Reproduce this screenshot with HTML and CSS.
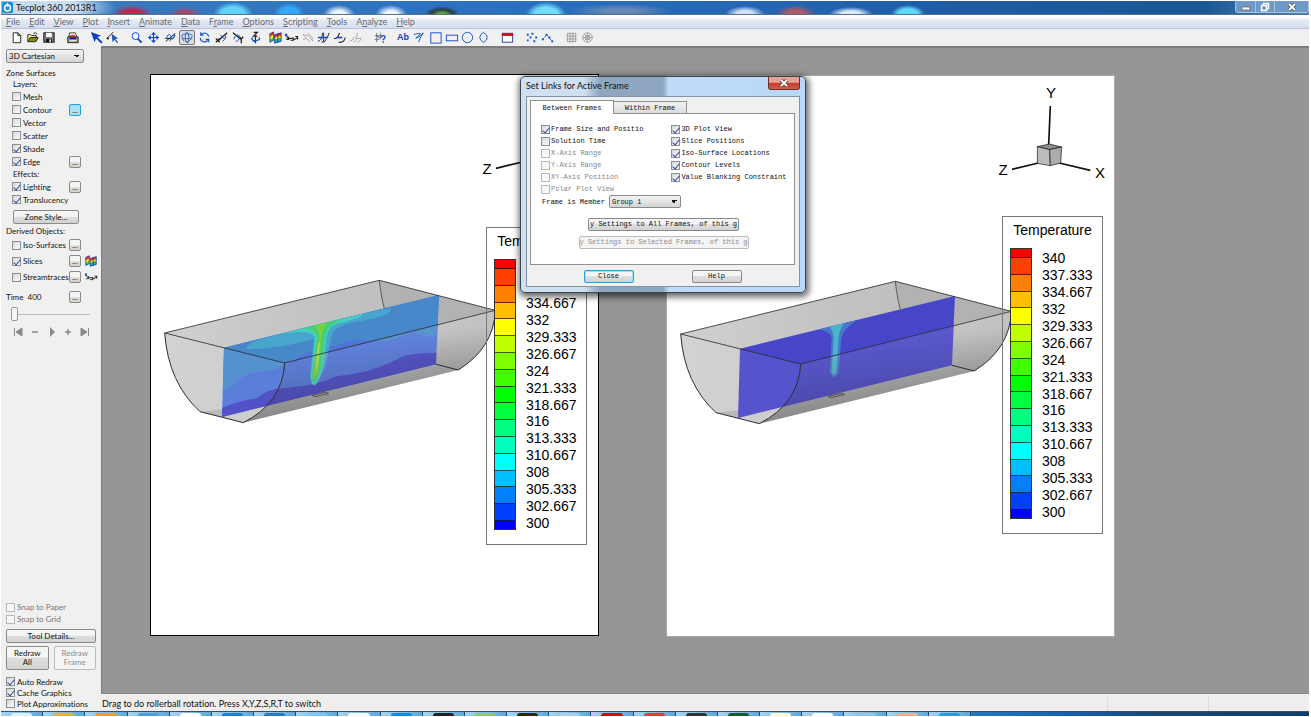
FILE: index.html
```html
<!DOCTYPE html>
<html lang="en">
<head>
    <meta charset="UTF-8">
    <meta name="viewport" content="width=device-width, initial-scale=1.0">
    <title>Tecplot 360 2013R1</title>
    <link rel="stylesheet" href="styles.css">
</head>
<body>

<div class="app">
    <header class="titlebar">
        <svg class="logo" viewBox="0 0 12 12"><rect width="12" height="12" rx="2" fill="#1d8fd0"/><circle cx="6" cy="6.5" r="3.2" fill="none" stroke="#fff" stroke-width="1.6"/><path d="M6 1v4" stroke="#fff" stroke-width="1.4"/></svg>
        <h1>Tecplot 360 2013R1</h1>
        <div class="window-buttons">
            <button aria-label="Minimize"><svg viewBox="0 0 12 10"><rect x="2" y="5" width="8" height="3" fill="#fff" stroke="#556" stroke-width=".7"/></svg></button>
            <button aria-label="Restore"><svg viewBox="0 0 12 10"><path d="M4.500 3V1.500h5v5H8M2.500 3.500h5v5h-5z" fill="none" stroke="#fff" stroke-width="1.500"/></svg></button>
            <button class="wide" aria-label="Close"><svg viewBox="0 0 12 10"><path d="M3 2l6 6M9 2L3 8" stroke="#445" stroke-width="3.200"/><path d="M3 2l6 6M9 2L3 8" stroke="#fff" stroke-width="1.900"/></svg></button>
        </div>
    </header>

    <nav class="menubar">
        <a href="#"><u>F</u>ile</a>
        <a href="#"><u>E</u>dit</a>
        <a href="#"><u>V</u>iew</a>
        <a href="#"><u>P</u>lot</a>
        <a href="#"><u>I</u>nsert</a>
        <a href="#"><u>A</u>nimate</a>
        <a href="#"><u>D</u>ata</a>
        <a href="#">F<u>r</u>ame</a>
        <a href="#"><u>O</u>ptions</a>
        <a href="#"><u>S</u>cripting</a>
        <a href="#"><u>T</u>ools</a>
        <a href="#">A<u>n</u>alyze</a>
        <a href="#"><u>H</u>elp</a>
    </nav>

    <div class="toolbar">
        <div class="group">
            <button aria-label="New"><svg viewBox="0 0 16 16"><path d="M4.500 3h5l3 3v7.500h-8zM9.500 3v3h3" fill="#fff" stroke="#222"/></svg></button>
            <button aria-label="Open"><svg viewBox="0 0 16 16"><path d="M3 12V5h3l1 1h5v2" fill="#ffff9a" stroke="#222"/><path d="M3 12.500L5.500 8H14l-2.500 4.500z" fill="#8a8a00" stroke="#222"/><path d="M9 3.500q2-1.500 4 1" fill="none" stroke="#222"/></svg></button>
            <button aria-label="Save"><svg viewBox="0 0 16 16"><rect x="3" y="3" width="11" height="10" fill="#777" stroke="#111"/><rect x="5.500" y="3" width="6" height="4.500" fill="#fff"/><rect x="5.500" y="9.500" width="6" height="3.500" fill="#111"/><rect x="9" y="10" width="1.500" height="3" fill="#fff"/></svg></button>
        </div>
        <div class="group">
            <button aria-label="Print"><svg viewBox="0 0 16 16"><path d="M5 3h6l1.500 4H4z" fill="#fff" stroke="#333"/><rect x="3" y="7.500" width="11" height="6" fill="#a8a078" stroke="#222"/><path d="M6 5h4l1 2H6z" fill="#e33"/><path d="M5 9h7" stroke="#00c" stroke-width="1.500"/><path d="M5 11.500h7" stroke="#fff"/></svg></button>
        </div>
        <div class="group">
            <button aria-label="Select"><svg viewBox="0 0 16 16"><path d="M2 2l11 4-4 1.500 5.500 5.500-1.500 1.500-5.500-5.500L6 13z" fill="#0a3fc4"/></svg></button>
            <button aria-label="Adjust"><svg viewBox="0 0 16 16"><path d="M9 2L2 9" stroke="#222" fill="none"/><path d="M7 4l7 5-3 .5 3 3.500-1 1-3-3.500-2 2.500z" fill="#2456b8"/><circle cx="3" cy="9" r="1.200" fill="#222"/></svg></button>
        </div>
        <div class="group view">
            <button aria-label="Zoom"><svg viewBox="0 0 16 16"><circle cx="7" cy="6.500" r="3.700" fill="#f4f8ff" stroke="#0a46c8"/><path d="M9.500 9.500l4 4" stroke="#0a46c8" stroke-width="2"/></svg></button>
            <button aria-label="Translate"><svg viewBox="0 0 16 16"><path d="M8 3v10M3 8h10M6 5l2-2 2 2M6 11l2 2 2-2M5 6L3 8l2 2M11 6l2 2-2 2" fill="none" stroke="#0a46c8" stroke-width="1.300"/></svg></button>
            <button aria-label="Spherical rotation"><svg viewBox="0 0 16 16"><path d="M3 12l10-8M2 9h8l3-3" fill="none" stroke="#222"/><path d="M5 10q-2-5 2-5 3 1 0 7M9 10q4-1 3-6l-3 3" fill="none" stroke="#1550c8"/></svg></button>
            <button class="pressed" aria-label="Rollerball rotation"><svg viewBox="0 0 16 16"><ellipse cx="8" cy="6.500" rx="6.500" ry="3" fill="none" stroke="#1550c8"/><ellipse cx="8" cy="8" rx="2.300" ry="6.500" fill="none" stroke="#1550c8"/><path d="M2 9l2 3M14 9l-3 3M10 14l-3-1" stroke="#234"/></svg></button>
            <button aria-label="Twist"><svg viewBox="0 0 16 16"><path d="M3.500 8.500a4.500 4.500 0 0 0 8 2.500M12.500 7a4.500 4.500 0 0 0-8-2M4 2.500V5.500h3M12.500 13v-3h-3" fill="none" stroke="#1550c8" stroke-width="1.200"/></svg></button>
            <button aria-label="Rotate about X"><svg viewBox="0 0 16 16"><path d="M2 9l4 4M6 9l-4 4M5 11l9-8" stroke="#222" stroke-width="1.400"/><path d="M7 5q3 6 5 3M9 12q5-3 3-6" fill="none" stroke="#1550c8"/></svg></button>
            <button aria-label="Rotate about Y"><svg viewBox="0 0 16 16"><path d="M2 3l9 7M9 7l2 3 2-3M11 10v4" stroke="#222" stroke-width="1.400" fill="none"/><path d="M3 10q1-6 6-4M5 12q4 0 4-5" fill="none" stroke="#1550c8"/></svg></button>
            <button aria-label="Rotate about Z"><svg viewBox="0 0 16 16"><path d="M6 2.500h4L6 6.500h4M8 7v7" fill="none" stroke="#222" stroke-width="1.300"/><path d="M5 8q-3 3 3 3.500 6-1 3.500-3.500M5 12h3" fill="none" stroke="#1550c8" stroke-width="1.200"/></svg></button>
        </div>
        <div class="group">
            <button aria-label="Slice"><svg viewBox="0 0 16 16"><use href="#slice-icon"/></svg></button>
            <button aria-label="Streamtrace"><svg viewBox="0 0 16 16"><use href="#stream-icon"/></svg></button>
            <button aria-label="Streamtrace rake" disabled><svg viewBox="0 0 16 16"><path d="M3 5l6 1M3 5l8 8M9 6l5 6M8 3l5 5v4M3 10l4-1" fill="none" stroke="#aaa"/></svg></button>
            <button aria-label="Add contour"><svg viewBox="0 0 16 16"><path d="M2 12q4 0 5-9M6 13q5 0 5-5 2 0 3-5" fill="none" stroke="#222"/><path d="M2 8h11M8 3v10" stroke="#1550c8" stroke-width="1.400"/></svg></button>
            <button aria-label="Remove contour"><svg viewBox="0 0 16 16"><path d="M2 9q4 1 6-6M7 13q6 1 7-5" fill="none" stroke="#222" stroke-width="1.200"/><path d="M5 8h6" stroke="#1550c8" stroke-width="1.800"/></svg></button>
            <button aria-label="Contour label" disabled><svg viewBox="0 0 16 16"><path d="M2 12q3 0 5-5M6 13q3-1 4-10M10 13q4-1 4-5M9 9h4" fill="none" stroke="#aaa"/></svg></button>
        </div>
        <div class="group">
            <button aria-label="Probe"><svg viewBox="0 0 16 16"><path d="M3 6h8M3 10h5M5 3v10M9 3v6" stroke="#777" fill="none"/><path d="M5 6l4 3" stroke="#1550c8"/><path d="M10 8q0-2 2-2t2 1.500q0 1.500-2 2.500v1M12 12v1.500" stroke="#1550c8" stroke-width="1.400" fill="none"/></svg></button>
        </div>
        <div class="group">
            <button class="text-tool">Ab</button>
            <button aria-label="Polyline"><svg viewBox="0 0 16 16"><path d="M2 5q4-2 7-1L4 9q5-2 8-6Q8 9 7 13" fill="none" stroke="#1550c8"/></svg></button>
            <button aria-label="Square"><svg viewBox="0 0 16 16"><rect x="3" y="3" width="11" height="11" fill="none" stroke="#1550c8"/></svg></button>
            <button aria-label="Rectangle"><svg viewBox="0 0 16 16"><rect x="2.500" y="5.500" width="12" height="6" fill="none" stroke="#1550c8"/></svg></button>
            <button aria-label="Circle"><svg viewBox="0 0 16 16"><circle cx="8" cy="8" r="5.500" fill="none" stroke="#1550c8"/></svg></button>
            <button aria-label="Ellipse"><svg viewBox="0 0 16 16"><path d="M8 2.500Q12 5 12 8t-4 5.500Q4 11 4 8t4-5.500z" fill="none" stroke="#1550c8"/></svg></button>
        </div>
        <div class="group">
            <button aria-label="Create frame"><svg viewBox="0 0 16 16"><rect x="2.500" y="3.500" width="11" height="9.500" fill="#fff" stroke="#1b3f90"/><path d="M2 5h12" stroke="#d00" stroke-width="2.500"/></svg></button>
        </div>
        <div class="group">
            <button aria-label="Extract points"><svg viewBox="0 0 16 16"><path d="M3 4h2v2H3zM8 3h2v2H8zM12 7h2v2h-2zM6 7h2v2H6zM3 10h2v2H3zM10 11h2v2h-2z" fill="#1550c8"/></svg></button>
            <button aria-label="Extract polyline"><svg viewBox="0 0 16 16"><path d="M3 10l4-5 6 7" fill="none" stroke="#1550c8" stroke-dasharray="2 1"/><path d="M2 9h2v2H2zM6 4h2v2H6zM9 7h2v2H9zM12 11h2v2h-2z" fill="#1550c8"/></svg></button>
        </div>
        <div class="group">
            <button aria-label="Grid" disabled><svg viewBox="0 0 16 16"><path d="M3.500 3.500h9v9h-9zM6.500 3v10M9.500 3v10M3 6.500h10M3 9.500h10" fill="none" stroke="#999"/></svg></button>
            <button aria-label="Polar grid" disabled><svg viewBox="0 0 16 16"><circle cx="8" cy="8" r="5" fill="none" stroke="#999"/><circle cx="8" cy="8" r="2.500" fill="none" stroke="#999"/><path d="M8 3v10M3 8h10M4.500 4.500l7 7M11.500 4.500l-7 7" stroke="#999" stroke-width=".7"/></svg></button>
        </div>
    </div>

    <div class="workspace">
        <aside class="sidebar">
            <select class="plot-type" aria-label="Plot type"><option>3D Cartesian</option></select>

            <h2>Zone Surfaces</h2>
            <h3>Layers:</h3>
            <div class="row"><label><input type="checkbox">Mesh</label></div>
            <div class="row"><label><input type="checkbox">Contour</label><button class="dots active">...</button></div>
            <div class="row"><label><input type="checkbox">Vector</label></div>
            <div class="row"><label><input type="checkbox">Scatter</label></div>
            <div class="row"><label><input type="checkbox" checked>Shade</label></div>
            <div class="row"><label><input type="checkbox" checked>Edge</label><button class="dots">...</button></div>
            <h3>Effects:</h3>
            <div class="row"><label><input type="checkbox" checked>Lighting</label><button class="dots">...</button></div>
            <div class="row"><label><input type="checkbox" checked>Translucency</label></div>
            <button class="btn zone-style">Zone Style...</button>

            <h2>Derived Objects:</h2>
            <div class="row tall"><label><input type="checkbox">Iso-Surfaces</label><button class="dots">...</button></div>
            <div class="row tall"><label><input type="checkbox" checked>Slices</label><button class="dots">...</button><svg class="side-icon" viewBox="0 0 16 16"><use href="#slice-icon"/></svg></div>
            <div class="row tall"><label><input type="checkbox">Streamtraces</label><button class="dots">...</button><svg class="side-icon" viewBox="0 0 16 16"><use href="#stream-icon"/></svg></div>

            <div class="row time"><span>Time&nbsp; 400</span><button class="dots">...</button></div>
            <input class="slider" type="range" min="0" max="100" value="0" aria-label="Time">
            <div class="playback">
                <button aria-label="First"><svg viewBox="0 0 10 10"><path d="M1.500 1v8M9 1v8L3 5z" stroke="#8a8a8a" fill="#8a8a8a"/></svg></button>
                <button aria-label="Step back"><svg viewBox="0 0 10 10"><path d="M2 5h6" stroke="#8a8a8a" stroke-width="1.500"/></svg></button>
                <button aria-label="Play"><svg viewBox="0 0 10 10"><path d="M3 0l5 5-5 5z" fill="#8a8a8a"/></svg></button>
                <button aria-label="Step forward"><svg viewBox="0 0 10 10"><path d="M2 5h6M5 2v6" stroke="#8a8a8a" stroke-width="1.500"/></svg></button>
                <button aria-label="Last"><svg viewBox="0 0 10 10"><path d="M8.500 1v8M1 1v8l6-4z" stroke="#8a8a8a" fill="#8a8a8a"/></svg></button>
            </div>

            <div class="side-bottom">
                <label class="snap"><input type="checkbox" disabled>Snap to Paper</label>
                <label class="snap"><input type="checkbox" disabled>Snap to Grid</label>
                <button class="btn">Tool Details...</button>
                <div class="redraw">
                    <button class="btn">Redraw<br>All</button>
                    <button class="btn" disabled>Redraw<br>Frame</button>
                </div>
                <label><input type="checkbox" checked>Auto Redraw</label>
                <label><input type="checkbox" checked>Cache Graphics</label>
                <label><input type="checkbox">Plot Approximations</label>
            </div>
        </aside>

        <main class="main">
            <div class="canvas">
                <section class="frame frame-active">
                    <svg class="plot" viewBox="0 0 448 562">
                        <g transform="translate(-1 196) scale(.3333)">
                            <use href="#tank-back"/>
                            <g clip-path="url(#slice-clip)">
                                <rect width="1050" height="480" fill="#4f74d8"/>
                                <path d="M210 225L870 68L866 165Q858 198 842 200Q820 195 790 182Q740 205 700 212Q600 200 560 222L480 243C430 262 400 296 340 302C260 304 260 350 216 362z" fill="#4788ca"/>
                                <path d="M216 410Q270 388 320 382Q350 352 410 350Q500 345 560 315Q660 310 760 255Q800 245 860 245V282L216 440z" fill="#4543c4"/>
                                <path d="M290 232Q292 212 390 188L500 155L722 112Q728 130 650 147Q550 160 545 195L525 290L495 345Q480 335 480 310L492 205Q380 235 290 235z" fill="#48a6cc"/>
                                <path d="M390 188L640 128Q625 145 560 158Q534 168 530 200L520 285Q508 340 490 342Q478 335 486 290L494 200Q490 180 440 183z" fill="#45cfc4"/>
                                <path d="M462 168L580 142Q528 165 524 200L515 280Q505 330 490 332Q483 325 490 285L501 205Q500 178 462 170z" fill="#46cf73"/>
                                <path d="M498 164L532 155Q516 170 514 200L507 280Q502 318 492 322Q488 315 495 280L507 200Q508 180 498 164z" fill="#78d23c"/>
                                <path d="M507 215L500 295" stroke="#b4d84a" stroke-width="5"/>
                            </g>
                            <use href="#tank-front"/>
                        </g>
                        <use href="#axes"/>
                    </svg>
                    <div class="legend"></div>
                </section>

                <section class="frame frame-second">
                    <svg class="plot" viewBox="0 0 448 562">
                        <g transform="translate(-1 196) scale(.3333)">
                            <use href="#tank-back"/>
                            <g clip-path="url(#slice-clip)">
                                <rect width="1050" height="480" fill="#4846c8"/>
                                <path d="M455 172L580 140Q530 170 526 200L518 300Q505 330 492 300L497 200Q495 178 455 172z" fill="#4878cc"/>
                                <path d="M490 163L535 152Q519 175 518 200L511 300Q504 315 497 300L503 200Q503 180 490 163z" fill="#48b4cc"/>
                            </g>
                            <use href="#tank-front"/>
                        </g>
                        <use href="#axes"/>
                    </svg>
                    <div class="legend"></div>
                </section>
            </div>
            <footer class="status">
                <span>Drag to do rollerball rotation. Press X,Y,Z,S,R,T to switch</span>
                <i></i><i></i>
            </footer>
        </main>
    </div>

    <div class="taskbar"></div>

    <div class="dialog" role="dialog" aria-labelledby="dialog-title">
        <div class="dialog-title">
            <h2 id="dialog-title">Set Links for Active Frame</h2>
            <button class="close" aria-label="Close"><svg viewBox="0 0 12 10"><path d="M3 2l6 6M9 2L3 8" stroke="#633" stroke-width="3.400"/><path d="M3 2l6 6M9 2L3 8" stroke="#fff" stroke-width="2"/></svg></button>
        </div>
        <div class="dialog-body">
            <div class="tabs">
                <button class="tab selected">Between Frames</button>
                <button class="tab">Within Frame</button>
            </div>
            <div class="pane">
                <div class="checks">
                    <div class="check-col">
                        <label><input type="checkbox" checked>Frame Size and Positio</label>
                        <label><input type="checkbox">Solution Time</label>
                        <label class="off"><input type="checkbox" disabled>X-Axis Range</label>
                        <label class="off"><input type="checkbox" disabled>Y-Axis Range</label>
                        <label class="off"><input type="checkbox" disabled>XY-Axis Position</label>
                        <label class="off"><input type="checkbox" disabled>Polar Plot View</label>
                    </div>
                    <div class="check-col">
                        <label><input type="checkbox" checked>3D Plot View</label>
                        <label><input type="checkbox" checked>Slice Positions</label>
                        <label><input type="checkbox" checked>Iso-Surface Locations</label>
                        <label><input type="checkbox" checked>Contour Levels</label>
                        <label><input type="checkbox" checked>Value Blanking Constraint</label>
                    </div>
                </div>
                <div class="member">
                    <label for="group">Frame is Member</label>
                    <select id="group"><option>Group 1</option></select>
                </div>
                <button class="btn apply">y Settings to All Frames, of this g</button>
                <button class="btn apply selected-frames" disabled>y Settings to Selected Frames, of this g</button>
            </div>
            <div class="actions">
                <button class="btn default">Close</button>
                <button class="btn">Help</button>
            </div>
        </div>
    </div>
</div>

<!-- shared drawing parts -->
<svg class="defs" aria-hidden="true">
    <defs>
        <linearGradient id="side" x1="0" y1="0" x2=".25" y2="1">
            <stop offset=".35" stop-color="#000" stop-opacity="0"/>
            <stop offset="1" stop-color="#000" stop-opacity=".22"/>
        </linearGradient>
        <linearGradient id="inner" x1="0" y1="0" x2="1" y2="0">
            <stop offset="0" stop-color="#d0d0d0"/>
            <stop offset=".5" stop-color="#c2c2c2"/>
            <stop offset="1" stop-color="#bcbcbc"/>
        </linearGradient>
        <clipPath id="slice-clip"><path d="M222 230L867 72L858 280L216 438z"/></clipPath>
        <g id="tank-back">
            <path d="M44 186L688 28L1036 118Q1032 230 925 297L280 455L150 422Q55 335 44 186z" fill="url(#inner)"/>
            <path d="M688 28L1036 118L867 158L858 280L867 72L703 112z" fill="#b2b2b2"/>
            <path d="M404 276L1036 118Q1032 230 925 297L280 455Q398 395 404 276z" fill="url(#side)"/>
            <path d="M150 422L280 408L216 438z" fill="#b4b4b4"/>
            <path d="M688 28Q694 80 703 112" fill="none" stroke="#444" stroke-width="2.500"/>
        </g>
        <g id="tank-front">
            <path d="M44 186L404 276Q398 395 280 455L150 422Q55 335 44 186z" fill="#fff" fill-opacity=".08"/>
            <path d="M404 276L1036 118Q1032 230 925 297L280 455Q398 395 404 276z" fill="#fff" fill-opacity=".1"/>
            <path d="M404 276L1036 118Q1032 230 925 297L280 455Q398 395 404 276z" fill="url(#side)"/>
            <path d="M44 186L688 28L1036 118L404 276z" fill="none" stroke="#2c2c34" stroke-width="2.500"/>
            <path d="M44 186Q55 335 150 422L280 455Q398 395 404 276M1036 118Q1032 230 925 297L858 280" fill="none" stroke="#2c2c34" stroke-width="3"/>
            <path d="M486 373L528 364L536 368L495 377z" fill="none" stroke="#333" stroke-width="2"/>
        </g>
        <g id="axes">
            <g transform="translate(313 -5) scale(.3333)" stroke="#111">
                <path d="M211 105L206 222M96 295L175 276M238 276L331 298" stroke-width="5"/>
                <path d="M172 227L208 219L245 228L209 236z" fill="#8c8c8c" stroke-width="2"/>
                <path d="M172 227L209 236L211 284L172 277z" fill="#bbb" stroke-width="2"/>
                <path d="M209 236L245 228L242 276L211 284z" fill="#acacac" stroke-width="2"/>
            </g>
            <g font-family="Liberation Sans, Arial, sans-serif" font-size="15" text-anchor="middle" fill="#000">
                <text x="384" y="22">Y</text>
                <text x="336" y="99">Z</text>
                <text x="433" y="102">X</text>
            </g>
        </g>
        <g id="slice-icon">
            <path d="M2 4l4-2v9l-4 2z" fill="#3cc850"/>
            <path d="M2 4l4-2v3L2 7z" fill="#f0321e"/>
            <path d="M2 7l4-2v3l-4 2z" fill="#ffe600"/>
            <path d="M7 5l7-2v9l-7 2z" fill="#2db84c"/>
            <path d="M7 5l7-2v3L7 8z" fill="#f0321e"/>
            <path d="M7 8l7-2v2l-7 2z" fill="#ffe600"/>
            <path d="M7 12l7-2v2l-7 2z" fill="#18a8f0"/>
            <path d="M2 4l4-2v9l-4 2zM7 5l7-2v9l-7 2zM10.500 4v9" fill="none" stroke="#1232b0" stroke-width=".8"/>
        </g>
        <g id="stream-icon">
            <path d="M2 5q2 5 5 4t4 1q2 0 4-3M5 7v3H2.500M10 8v3H7M14.500 10V7H12" fill="none" stroke="#222" stroke-width="1.100"/>
            <rect x="1" y="4" width="2.500" height="2.500" fill="#1550c8"/>
        </g>
    </defs>
</svg>

<script>
    const colors = ["#ff0000", "#ff4000", "#ff8000", "#ffbf00", "#ffff00", "#bfff00", "#80ff00", "#40ff00", "#00ff00",
        "#00ff40", "#00ff80", "#00ffbf", "#00ffff", "#00bfff", "#0080ff", "#0040ff", "#0000ff"];
    const levels = ["340", "337.333", "334.667", "332", "329.333", "326.667", "324", "321.333", "318.667",
        "316", "313.333", "310.667", "308", "305.333", "302.667", "300"];

    document.querySelectorAll(".legend").forEach(legend => {
        legend.innerHTML = "<h4>Temperature</h4><div class='scale'>" +
            "<div class='bands'>" + colors.map(c => `<i style="background:${c}"></i>`).join("") + "</div>" +
            "<ul>" + levels.map(l => `<li>${l}</li>`).join("") + "</ul></div>";
    });

    // icon colours of the running programs, in order
    const tasks = ["#dff0fa", "#e8b040", "#e8a030", "#4c9fd8", "#ffffff", "#1a80d8", "#2a78c0", "#7cc8f8", "#f4faff",
        "#0a8cf0", "#222222", "#8cc878", "#302800", "#a8d0ec", "#e80000", "#e04030", "#333333", "#186030",
        "#fff8d0", "#ffffff", "#98c4e4", "#f0b090", "#10a8e0"];
    document.querySelector(".taskbar").innerHTML = tasks.map(c => `<span><i style="background:${c}"></i></span>`).join("");
</script>

</body>
</html>
```

FILE: styles.css
```css
* {
    box-sizing: border-box;
}

body {
    margin: 0;
    background: #fff;
    color: #111;
    font-family: Lato, Arial, sans-serif;
    font-size: 8px;
}

h1, h2, h3, h4, ul {
    margin: 0;
    padding: 0;
    font-weight: normal;
    list-style: none;
}

button, select, input {
    margin: 0;
    padding: 0;
    font: inherit;
    color: inherit;
}

button svg {
    display: block;
}

.defs {
    position: absolute;
    width: 0;
    height: 0;
}

.app {
    position: relative;
    display: flex;
    flex-direction: column;
    height: 100vh;
    padding: 1px 2px 1px 1px;
    overflow: hidden;
}

/* title bar */
.titlebar {
    display: flex;
    align-items: center;
    height: 14px;
    flex: none;
    padding-left: 1px;
    border-bottom: 1px solid #5a6f88;
    background:
        radial-gradient(ellipse 70px 18px at 45px 7px, rgba(215, 232, 248, .9) 50%, transparent 100%),
        radial-gradient(ellipse 20px 9px at 131px 13px, #b8284c 40%, transparent 100%),
        radial-gradient(ellipse 16px 6px at 184px 12px, #a04868 30%, transparent 100%),
        radial-gradient(ellipse 20px 13px at 232px 14px, #62d4fa 60%, transparent 100%),
        radial-gradient(ellipse 15px 11px at 288px 13px, #30a8f8 60%, transparent 100%),
        radial-gradient(ellipse 16px 10px at 338px 14px, #f0f8ff 40%, transparent 100%),
        radial-gradient(ellipse 16px 10px at 390px 14px, #f0f8ff 40%, transparent 100%),
        radial-gradient(ellipse 18px 9px at 441px 14px, #60a840 25%, #283c48 60%, transparent 100%),
        radial-gradient(ellipse 20px 13px at 545px 14px, #70dcfa 60%, transparent 100%),
        radial-gradient(ellipse 50px 7px at 620px 10px, rgba(130, 150, 180, .7) 30%, transparent 100%),
        radial-gradient(ellipse 20px 8px at 744px 13px, #d0e4f8 40%, transparent 100%),
        radial-gradient(ellipse 20px 9px at 795px 13px, #b05868 40%, transparent 100%),
        radial-gradient(ellipse 22px 7px at 850px 13px, #d8ecff 40%, transparent 100%),
        radial-gradient(ellipse 17px 10px at 907px 14px, #60d8fa 60%, transparent 100%),
        linear-gradient(90deg, #3c7cc0, #2a70c0 40%, #1d5ba4 75%, #1b5794 92%, #4f88c0);
}

.logo {
    width: 11px;
    height: 11px;
}

.titlebar h1 {
    flex: 1;
    padding-left: 3px;
    font: 9px/13px Lato, "Open Sans", sans-serif;
}

.window-buttons {
    display: flex;
    align-self: flex-start;
    height: 12px;
    border: 1px solid #a9c4e0;
    border-top: 0;
    border-radius: 0 0 3px 3px;
}

.window-buttons button {
    width: 19px;
    border: 0;
    background: #6f9ac8;
}

.window-buttons button + button {
    border-left: 1px solid #a9c4e0;
}

.window-buttons .wide {
    width: 34px;
}

.window-buttons svg {
    width: 12px;
    height: 10px;
    margin: 0 auto;
}

/* menu */
.menubar {
    display: flex;
    gap: 9px;
    flex: none;
    height: 14px;
    padding-left: 5px;
    border-bottom: 1px solid #b8c4dc;
    background: linear-gradient(#fff 15%, #e4eaf6 40%, #d5ddef);
    font: 9px/14px Lato, "Open Sans", sans-serif;
    font-variant-ligatures: none;
}

.menubar a {
    color: #6c6c70;
    text-decoration: none;
}

/* toolbar */
.toolbar {
    display: flex;
    align-items: center;
    flex: none;
    height: 17px;
    padding-left: 7px;
    background: #f0f0f0;
}

.group {
    display: flex;
    margin-right: 8px;
}

.group.view {
    gap: 1px;
    margin-right: 4px;
}

.group button {
    width: 16px;
    height: 15px;
    border: 0;
    background: none;
}

.group svg {
    width: 15px;
    height: 15px;
    margin: 0 auto;
}

.group .pressed {
    border: 1px solid #777;
    border-radius: 2px;
    background: #dcdcdc;
}

.group .pressed svg {
    width: 14px;
    height: 13px;
}

.group .text-tool {
    color: #0a3fc4;
    font: bold 9px/15px "Liberation Sans", Arial, sans-serif;
}

/* left panel */
.workspace {
    display: flex;
    flex: 1;
    min-height: 0;
}

.sidebar {
    display: flex;
    flex-direction: column;
    flex: none;
    width: 100px;
    padding: 3px 5px 2px;
    background: #f0f0f0;
    font-variant-ligatures: none;
}

.sidebar h2, .sidebar h3 {
    font-size: 8px;
    line-height: 11px;
}

.sidebar h3 {
    padding-left: 7px;
}

.row + h3 {
    margin-top: 1px;
}

select {
    appearance: none;
    border: 1px solid #8a8a8a;
    border-radius: 2px;
    background:
        linear-gradient(45deg, transparent 50%, #111 50%) right 6px center / 3px 3px no-repeat,
        linear-gradient(315deg, transparent 50%, #111 50%) right 3px center / 3px 3px no-repeat,
        linear-gradient(#f4f4f4, #d4d4d4);
}

.plot-type {
    width: 78px;
    height: 14px;
    margin-bottom: 5px;
    padding-left: 2px;
}

label {
    display: flex;
    align-items: center;
    white-space: nowrap;
}

input[type="checkbox"] {
    appearance: none;
    position: relative;
    flex: none;
    width: 9px;
    height: 9px;
    margin-right: 2px;
    border: 1px solid #8e8f8f;
    background: linear-gradient(135deg, #d4d8dc, #fbfbfb);
}

input[type="checkbox"]:disabled {
    border-color: #b8b8b8;
    background: #f8f8f8;
}

input[type="checkbox"]:checked::after {
    content: "";
    position: absolute;
    left: 2px;
    top: 0;
    width: 3px;
    height: 6px;
    border: solid #33459c;
    border-width: 0 1px 1px 0;
    transform: rotate(40deg);
}

.row {
    display: flex;
    align-items: center;
    height: 13px;
    padding-left: 6px;
}

.row.tall {
    height: 16px;
}

.row label, .row span {
    flex: none;
    width: 57px;
}

.row.time {
    height: 16px;
    margin-top: 4px;
    padding-left: 0;
}

.row.time span {
    width: 63px;
}

.btn, .dots {
    border: 1px solid #8a8a8a;
    border-radius: 2px;
    background: linear-gradient(#f5f5f5 45%, #dfdfdf 50%, #d2d2d2);
    text-align: center;
}

.btn:disabled {
    border-color: #bbb;
    background: #f4f4f4;
    color: #8c8c8c;
}

.dots {
    width: 12px;
    height: 12px;
    flex: none;
    line-height: 10px;
}

.dots.active {
    border-color: #2a9fd8;
    background: #a8e0fa;
}

.side-icon {
    flex: none;
    width: 14px;
    height: 14px;
    margin-left: 3px;
}

.zone-style {
    width: 66px;
    height: 14px;
    margin: 4px 0 2px 7px;
}

.slider {
    appearance: none;
    width: 79px;
    height: 14px;
    margin: 2px 0 4px 5px;
    background: linear-gradient(#bbb, #bbb) center / 100% 1px no-repeat;
}

.slider::-webkit-slider-thumb {
    appearance: none;
    width: 7px;
    height: 14px;
    border: 1px solid #999;
    border-radius: 2px;
    background: #f6f6f6;
}

.playback {
    display: flex;
    justify-content: space-between;
    padding: 0 6px 0 7px;
}

.playback button {
    width: 10px;
    height: 14px;
    border: 0;
    background: none;
}

.side-bottom {
    display: flex;
    flex-direction: column;
    margin-top: auto;
}

.side-bottom label {
    height: 11px;
}

.side-bottom .snap {
    height: 12px;
    color: #777;
}

.side-bottom > .btn {
    height: 14px;
    margin-top: 4px;
}

.redraw {
    display: flex;
    gap: 5px;
    margin: 3px 0 6px;
}

.redraw .btn {
    flex: 1;
    height: 24px;
    line-height: 9px;
}

/* drawing area */
.main {
    display: flex;
    flex: 1;
    flex-direction: column;
    min-width: 0;
}

.canvas {
    position: relative;
    flex: 1;
    overflow: hidden;
    border: solid #7c7c7c;
    border-width: 2px 0 0 1px;
    background: #969696;
}

.frame {
    position: absolute;
    width: 449px;
    height: 562px;
    border: 1px solid #aaa;
    background: #fff;
}

.frame-active {
    left: 48px;
    top: 26px;
    border-color: #000;
}

.frame-second {
    left: 564px;
    top: 27px;
}

.plot {
    display: block;
    width: 448px;
    height: 562px;
}

.legend {
    position: absolute;
    left: 335px;
    top: 140px;
    width: 101px;
    height: 318px;
    padding: 5px 7px;
    border: 1px solid #777;
    font: 14px/16px "Liberation Sans", Arial, sans-serif;
    color: #000;
}

.frame-active .legend {
    top: 152px;
}

.legend h4 {
    margin-bottom: 10px;
    text-align: center;
}

.scale {
    display: flex;
    gap: 10px;
    height: 271px;
}

.bands {
    display: flex;
    flex-direction: column;
    width: 22px;
    border: 1px solid #333;
}

.bands i {
    flex: 2;
    border-bottom: 1px solid rgba(0, 0, 0, .65);
}

.bands i:first-child, .bands i:last-child {
    flex: 1;
}

.bands i:last-child {
    border: 0;
}

.scale ul {
    display: flex;
    flex-direction: column;
    padding-top: 2px;
    height: 273px;
}

.scale li {
    flex: 1;
}

.status {
    display: flex;
    flex: none;
    height: 18px;
    padding-top: 2px;
    border-top: 1px solid #888;
    background: #f0eeec;
    font: 9px/15px Lato, "Open Sans", sans-serif;
    font-variant-ligatures: none;
}

.status span {
    flex: 1;
    padding-left: 1px;
}

.status i {
    width: 101px;
    border-left: 1px solid #ddd;
}

/* taskbar */
.taskbar {
    display: flex;
    flex: none;
    height: 5px;
    padding-right: 338px;
    border-top: 1px solid #36506c;
    background: linear-gradient(90deg, #2478b8 74%, #1868b8 80%, #184878 88%, #143c68);
}

.taskbar span {
    flex: 1;
    padding: 1px 10px 0;
    border-right: 1px solid #1c4c78;
    background: linear-gradient(90deg, #a8d4f0, #5fa8d8);
}

.taskbar i {
    display: block;
    height: 3px;
    border-radius: 4px 4px 0 0;
}

/* dialog */
.dialog {
    position: absolute;
    left: 520px;
    top: 76px;
    width: 286px;
    padding: 0 5px 5px;
    border: 1px solid #3a4654;
    border-radius: 5px;
    background: linear-gradient(90deg, #cfe0f1 22%, #8fa6c0 28%, #8fa6c0 50%, #c0dbf8 52%, #b8d8f8);
    box-shadow: 1px 2px 6px 2px rgba(0, 0, 0, .6);
    font: 7px/12px "Liberation Mono", "Courier New", monospace;
}

.dialog-title {
    display: flex;
    justify-content: space-between;
    height: 19px;
}

.dialog-title h2 {
    font: 9px/18px Lato, "Open Sans", sans-serif;
    font-variant-ligatures: none;
}

.close {
    width: 32px;
    height: 13px;
    border: 1px solid #6c3030;
    border-top: 0;
    border-radius: 0 0 3px 3px;
    background: linear-gradient(#e8a090 45%, #c03c28 50%, #d0604c);
}

.close svg {
    width: 12px;
    height: 10px;
    margin: 0 auto;
}

.dialog-body {
    padding: 3px 4px 1px 3px;
    border: 1px solid #8494a4;
    background: #f0f0f0;
}

.tabs {
    display: flex;
    align-items: flex-end;
}

.tab {
    width: 73px;
    height: 12px;
    border: 1px solid #909090;
    border-bottom: 0;
    border-left: 0;
    background: linear-gradient(#f2f2f2, #dcdcdc);
}

.tab.selected {
    position: relative;
    width: 84px;
    height: 14px;
    margin-bottom: -1px;
    border-left: 1px solid #909090;
    background: #fff;
}

.pane {
    display: flex;
    flex-direction: column;
    height: 152px;
    padding: 9px 8px 0 10px;
    border: 1px solid #909090;
    background: #fff;
}

.checks {
    display: flex;
    gap: 28px;
}

.check-col label {
    height: 12px;
}

.check-col input[type="checkbox"] {
    margin-right: 1px;
}

.off {
    color: #888;
}

.member {
    display: flex;
    gap: 4px;
    padding-left: 1px;
}

.member select {
    width: 72px;
    height: 13px;
    padding-left: 2px;
}

.btn.apply {
    align-self: center;
    width: 151px;
    height: 13px;
    margin-top: 10px;
    overflow: hidden;
    white-space: nowrap;
    line-height: 11px;
}

.btn.apply.selected-frames {
    width: 170px;
    margin-top: 5px;
}

.actions {
    display: flex;
    justify-content: center;
    gap: 58px;
    padding: 5px 0 2px;
}

.actions .btn {
    width: 50px;
    height: 13px;
    line-height: 11px;
}

.btn.default {
    border-color: #2a9fd8;
    box-shadow: inset 0 0 0 1px #a0e0f8;
}
```
